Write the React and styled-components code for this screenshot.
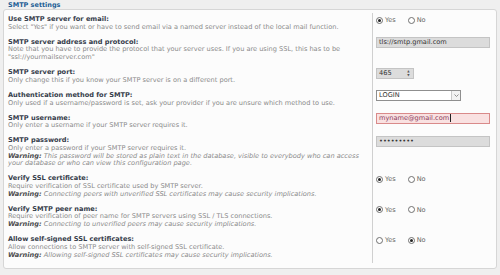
import React from "react";
import styled, { createGlobalStyle } from "styled-components";

const Global = createGlobalStyle`
  html, body { margin: 0; padding: 0; background: #efefef; }
  body { font-family: "DejaVu Sans", Verdana, sans-serif; }
`;

const Page = styled.div`
  width: 500px;
  height: 275px;
  box-sizing: border-box;
  padding: 0 3px;
  background: #efefef;
`;

const Legend = styled.div`
  height: 9px;
  padding-left: 5px;
  font-size: 6.5px;
  line-height: 10px;
  font-weight: bold;
  color: #1b5d95;
`;

const Box = styled.div`
  border: 1px solid #d6d6d6;
  border-radius: 3px;
  background: #fcfcfc;
  padding: 2.5px 0 5.5px 4px;
`;

const Row = styled.div`
  display: flex;
`;

const Term = styled.div`
  width: 364px;
  flex: none;
  border-right: 1px solid #d0d0d0;
  padding: 3.6px 0 3.7px;
  font-size: 6.6px;
  line-height: 7.7px;
`;

const Label = styled.div`
  font-weight: bold;
  color: #363d4b;
`;

const Explain = styled.div`
  color: #8a8a8a;
  white-space: nowrap;
`;

const Warn = styled(Explain)`
  font-style: italic;
  b { color: #4a4a4a; }
`;

const Value = styled.div`
  padding: 2px 0 0 3px;
  font-size: 6.6px;
`;

const Radios = styled.div`
  display: flex;
  align-items: center;
  height: 11px;
  color: #666;
`;

const RadioOpt = styled.span`
  display: inline-flex;
  align-items: center;
  gap: 2px;
  margin-right: 12px;
`;

const Circle = styled.span`
  width: 7px;
  height: 7px;
  box-sizing: border-box;
  border-radius: 50%;
  border: 1px solid #6f6f6f;
  background: #fff;
  display: inline-flex;
  align-items: center;
  justify-content: center;
  &::after {
    content: "";
    width: 3px;
    height: 3px;
    border-radius: 50%;
    background: ${(p) => (p.$on ? "#222" : "transparent")};
  }
`;

const TextBox = styled.div`
  width: ${(p) => p.$w}px;
  height: 11px;
  box-sizing: border-box;
  border: 1px solid ${(p) => (p.$error ? "#d98a8a" : "#c4c4c4")};
  background: ${(p) => (p.$error ? "#f9e1e1" : "#dcdcdc")};
  color: ${(p) => (p.$error ? "#8a3a5a" : "#333")};
  padding: 0 2px;
  line-height: 9px;
  display: flex;
  align-items: center;
  white-space: nowrap;
`;

const Caret = styled.span`
  width: 1px;
  height: 8px;
  background: #222;
  margin-left: 0.5px;
`;

const Spin = styled.span`
  margin-left: auto;
  width: 5px;
  height: 8px;
  display: flex;
  flex-direction: column;
  justify-content: space-around;
  align-items: center;
  font-size: 3px;
  line-height: 3px;
  color: #555;
`;

const Select = styled.div`
  width: 85px;
  height: 11px;
  box-sizing: border-box;
  border: 1px solid #8f8f8f;
  background: #fff;
  color: #333;
  display: flex;
  align-items: center;
  padding-left: 2px;
  line-height: 9px;
`;

const Arrow = styled.span`
  margin-left: auto;
  width: 9px;
  height: 9px;
  box-sizing: border-box;
  border-left: 1px solid #c9c9c9;
  background: #f2f2f2;
  display: flex;
  align-items: center;
  justify-content: center;
`;

const RadioPair = ({ yes }) => (
  <Radios>
    <RadioOpt>
      <Circle $on={yes} />
      Yes
    </RadioOpt>
    <RadioOpt>
      <Circle $on={!yes} />
      No
    </RadioOpt>
  </Radios>
);

const Setting = ({ label, lines, warn, children }) => (
  <Row>
    <Term>
      <Label>{label}</Label>
      {lines.map((l, i) => (
        <Explain key={i}>{l}</Explain>
      ))}
      {warn &&
        warn.map((w, i) => (
          <Warn key={"w" + i}>
            {i === 0 && <b>Warning: </b>}
            {w}
          </Warn>
        ))}
    </Term>
    <Value>{children}</Value>
  </Row>
);

export default function App() {
  return (
    <Page>
      <Global />
      <Legend>SMTP settings</Legend>
      <Box>
        <Setting
          label="Use SMTP server for email:"
          lines={['Select "Yes" if you want or have to send email via a named server instead of the local mail function.']}
        >
          <RadioPair yes />
        </Setting>
        <Setting
          label="SMTP server address and protocol:"
          lines={[
            "Note that you have to provide the protocol that your server uses. If you are using SSL, this has to be",
            '"ssl://yourmailserver.com"',
          ]}
        >
          <TextBox $w={114}>tls://smtp.gmail.com</TextBox>
        </Setting>
        <Setting
          label="SMTP server port:"
          lines={["Only change this if you know your SMTP server is on a different port."]}
        >
          <TextBox $w={38}>
            465
            <Spin>
              <span>▲</span>
              <span>▼</span>
            </Spin>
          </TextBox>
        </Setting>
        <Setting
          label="Authentication method for SMTP:"
          lines={["Only used if a username/password is set, ask your provider if you are unsure which method to use."]}
        >
          <Select>
            LOGIN
            <Arrow>
              <svg width="5" height="3" viewBox="0 0 5 3">
                <path d="M0.5 0.5 L2.5 2.5 L4.5 0.5" fill="none" stroke="#777" strokeWidth="0.8" />
              </svg>
            </Arrow>
          </Select>
        </Setting>
        <Setting
          label="SMTP username:"
          lines={["Only enter a username if your SMTP server requires it."]}
        >
          <TextBox $w={114} $error>
            myname@gmail.com
            <Caret />
          </TextBox>
        </Setting>
        <Setting
          label="SMTP password:"
          lines={["Only enter a password if your SMTP server requires it."]}
          warn={[
            "This password will be stored as plain text in the database, visible to everybody who can access",
            "your database or who can view this configuration page.",
          ]}
        >
          <TextBox $w={114}>•••••••••</TextBox>
        </Setting>
        <Setting
          label="Verify SSL certificate:"
          lines={["Require verification of SSL certificate used by SMTP server."]}
          warn={["Connecting peers with unverified SSL certificates may cause security implications."]}
        >
          <RadioPair yes />
        </Setting>
        <Setting
          label="Verify SMTP peer name:"
          lines={["Require verification of peer name for SMTP servers using SSL / TLS connections."]}
          warn={["Connecting to unverified peers may cause security implications."]}
        >
          <RadioPair yes />
        </Setting>
        <Setting
          label="Allow self-signed SSL certificates:"
          lines={["Allow connections to SMTP server with self-signed SSL certificate."]}
          warn={["Allowing self-signed SSL certificates may cause security implications."]}
        >
          <RadioPair yes={false} />
        </Setting>
      </Box>
    </Page>
  );
}
